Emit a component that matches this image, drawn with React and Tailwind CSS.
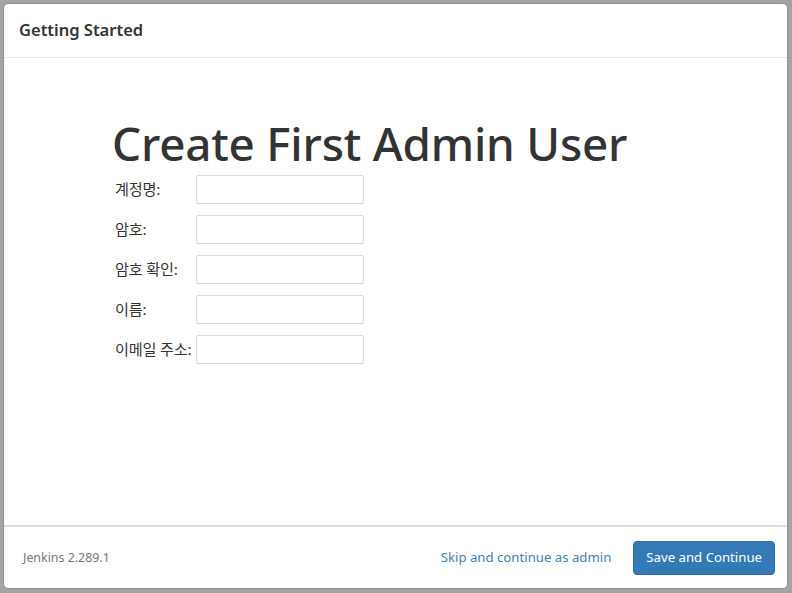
import React from 'react';

const fields = ['계정명:', '암호:', '암호 확인:', '이름:', '이메일 주소:'];

const App = () => {
  return (
    <div
      className="w-[792px] h-[593px] bg-[#a4a4a4] p-[3px] pr-[4px] pb-[4px]"
      style={{ fontFamily: '"Noto Sans", "Noto Sans CJK KR", sans-serif' }}
    >
      <div className="h-full flex flex-col bg-white rounded-[5px] border border-[#8e8e8e]">
        <div className="h-[54px] shrink-0 border-b border-[#e5e5e5] flex items-center px-[15px]">
          <h4 className="text-[16.5px] font-semibold text-[#333] leading-none">Getting Started</h4>
        </div>

        <div className="flex-1 pl-[108px] pt-[56px]">
          <h1 className="text-[45.8px] leading-[58px] font-medium text-[#333] tracking-[-0.2px]">
            Create First Admin User
          </h1>
          <div className="flex flex-col gap-[11px] mt-[3px]">
            {fields.map((label) => (
              <div key={label} className="flex items-center">
                <label className="w-[84px] shrink-0 pl-[3px] text-[15.2px] text-[#333] whitespace-nowrap tracking-[-0.2px]">
                  {label}
                </label>
                <input
                  type="text"
                  className="w-[168px] h-[29px] border border-[#d9d9d9] rounded-[2px] bg-white outline-none"
                />
              </div>
            ))}
          </div>
        </div>

        <div className="h-[63px] shrink-0 border-t-2 border-[#dcdcdc] flex items-center justify-between pl-[19px] pr-[12px]">
          <span className="text-[12.4px] text-[#777] pt-[2px]">Jenkins 2.289.1</span>
          <div className="flex items-center gap-[22px]">
            <button type="button" className="text-[13.2px] text-[#3f7fb5]">
              Skip and continue as admin
            </button>
            <button
              type="button"
              className="h-[34px] px-[12px] rounded-[4px] bg-[#337ab7] border border-[#2e6da4] text-white text-[13.2px]"
            >
              Save and Continue
            </button>
          </div>
        </div>
      </div>
    </div>
  );
};

export default App;
